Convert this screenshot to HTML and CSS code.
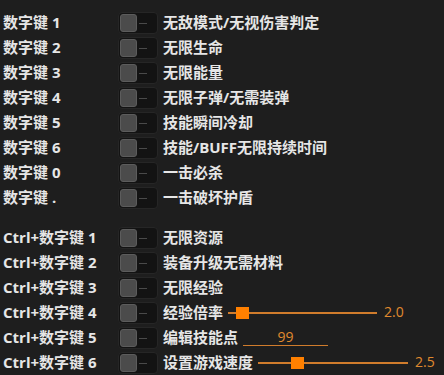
FILE: index.html
```html
<!DOCTYPE html>
<html lang="zh">
<head>
<meta charset="utf-8">
<link rel="stylesheet" href="styles.css">
</head>
<body>
<div class="panel">
  <div class="group">
    <div class="row"><span class="key">数字键 1</span><span class="toggle"><span class="knob"></span><span class="dash"></span></span><span class="desc">无敌模式/无视伤害判定</span></div>
    <div class="row"><span class="key">数字键 2</span><span class="toggle"><span class="knob"></span><span class="dash"></span></span><span class="desc">无限生命</span></div>
    <div class="row"><span class="key">数字键 3</span><span class="toggle"><span class="knob"></span><span class="dash"></span></span><span class="desc">无限能量</span></div>
    <div class="row"><span class="key">数字键 4</span><span class="toggle"><span class="knob"></span><span class="dash"></span></span><span class="desc">无限子弹/无需装弹</span></div>
    <div class="row"><span class="key">数字键 5</span><span class="toggle"><span class="knob"></span><span class="dash"></span></span><span class="desc">技能瞬间冷却</span></div>
    <div class="row"><span class="key">数字键 6</span><span class="toggle"><span class="knob"></span><span class="dash"></span></span><span class="desc">技能/BUFF无限持续时间</span></div>
    <div class="row"><span class="key">数字键 0</span><span class="toggle"><span class="knob"></span><span class="dash"></span></span><span class="desc">一击必杀</span></div>
    <div class="row"><span class="key">数字键 .</span><span class="toggle"><span class="knob"></span><span class="dash"></span></span><span class="desc">一击破坏护盾</span></div>
  </div>
  <div class="group">
    <div class="row"><span class="key">Ctrl+数字键 1</span><span class="toggle"><span class="knob"></span><span class="dash"></span></span><span class="desc">无限资源</span></div>
    <div class="row"><span class="key">Ctrl+数字键 2</span><span class="toggle"><span class="knob"></span><span class="dash"></span></span><span class="desc">装备升级无需材料</span></div>
    <div class="row"><span class="key">Ctrl+数字键 3</span><span class="toggle"><span class="knob"></span><span class="dash"></span></span><span class="desc">无限经验</span></div>
    <div class="row"><span class="key">Ctrl+数字键 4</span><span class="toggle"><span class="knob"></span><span class="dash"></span></span><span class="desc">经验倍率</span><span class="slider w149"><span class="thumb" style="left:8px"></span></span><span class="val">2.0</span></div>
    <div class="row"><span class="key">Ctrl+数字键 5</span><span class="toggle"><span class="knob"></span><span class="dash"></span></span><span class="desc">编辑技能点</span><span class="field">99</span></div>
    <div class="row"><span class="key">Ctrl+数字键 6</span><span class="toggle"><span class="knob"></span><span class="dash"></span></span><span class="desc">设置游戏速度</span><span class="slider w150"><span class="thumb" style="left:33px"></span></span><span class="val">2.5</span></div>
  </div>
</div>
</body>
</html>
```
FILE: styles.css
```css
html, body {
  margin: 0;
  padding: 0;
  background: #1e1e1e;
}
body {
  width: 444px;
  height: 375px;
  overflow: hidden;
  font-family: "Open Sans", "Noto Sans CJK SC", sans-serif;
  color: #e6e6e6;
}
.panel {
  padding: 12px 0 0 3px;
  display: flex;
  flex-direction: column;
  gap: 18px;
}
.group {
  display: flex;
  flex-direction: column;
  gap: 3px;
}
.row {
  display: flex;
  align-items: center;
  height: 22px;
}
.key {
  width: 115px;
  font-size: 15px;
  font-weight: 700;
  line-height: 22px;
  white-space: nowrap;
  margin-top: -3px;
}
.desc {
  font-size: 15px;
  font-weight: 700;
  line-height: 22px;
  margin-left: 5px;
  white-space: nowrap;
  margin-top: -3px;
}
.toggle {
  position: relative;
  width: 40px;
  height: 22px;
  box-sizing: border-box;
  background: #131313;
  border: 1px solid #262626;
  border-radius: 4px;
  flex: none;
}
.knob {
  position: absolute;
  left: 1px;
  top: 1px;
  width: 17px;
  height: 18px;
  box-sizing: border-box;
  background: #4b4b4b;
  border: 1px solid #5c5c5c;
  border-radius: 3px;
}
.dash {
  position: absolute;
  left: 20px;
  top: 10px;
  width: 8px;
  height: 1px;
  background: #4a4a4a;
}
.slider {
  position: relative;
  height: 2px;
  background: #d07c2c;
  margin-left: 5px;
  flex: none;
}
.w149 { width: 149px; }
.w150 { width: 150px; }
.thumb {
  position: absolute;
  top: -5px;
  width: 13px;
  height: 12px;
  background: #ff8000;
}
.val {
  margin-left: 7px;
  font-size: 14px;
  color: #e08a2e;
  line-height: 22px;
  margin-top: -2px;
}
.field {
  margin-left: 5px;
  width: 85px;
  border-bottom: 1px solid #d07c2c;
  color: #e08a2e;
  font-size: 14px;
  text-align: center;
  line-height: 17px;
  margin-top: -2px;
}
```
